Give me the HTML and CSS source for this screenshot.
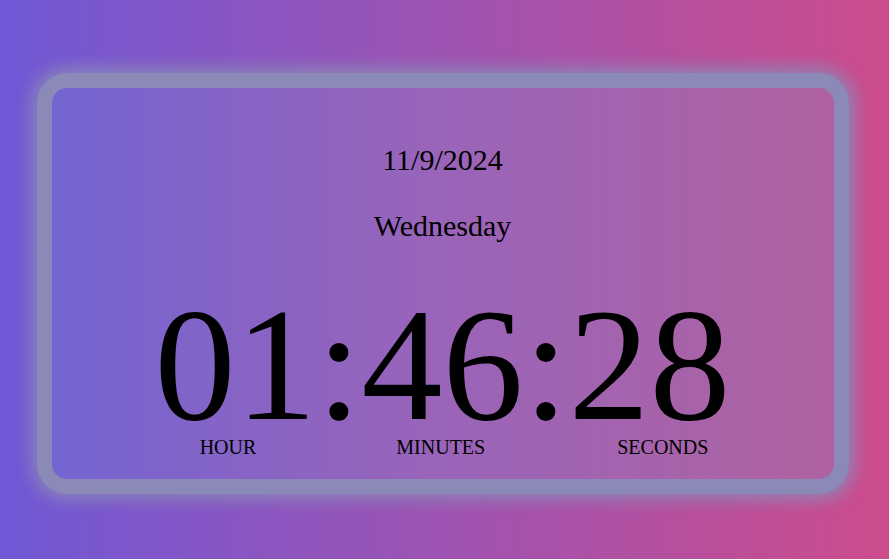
FILE: index.html
```html
<!DOCTYPE html>
<html lang="en">
<head>
<meta charset="utf-8">
<title>Clock</title>
<link rel="stylesheet" href="styles.css">
</head>
<body>
  <main class="clock">
    <h2 class="date">11/9/2024</h2>
    <h2 class="day">Wednesday</h2>
    <div class="time">01:46:28</div>
    <div class="labels">
      <span class="label label-hour">HOUR</span>
      <span class="label label-min">MINUTES</span>
      <span class="label">SECONDS</span>
    </div>
  </main>
</body>
</html>
```

FILE: styles.css
```css
* { box-sizing: border-box; }

html, body { height: 100%; }

body {
  margin: 0;
  padding: 8px 4px 0 0;
  display: flex;
  align-items: center;
  justify-content: center;
  background: linear-gradient(to right, #7058d6, #9e53b2 50%, #cd4c8c);
  font-family: "Liberation Serif", "Times New Roman", serif;
  color: #000;
}

.clock {
  box-sizing: content-box;
  width: 782px;
  padding: 55px 0 21px;
  border: 15px solid #8a89b7;
  border-radius: 30px;
  background: linear-gradient(to right, #7464d1, #9a64b9 50%, #af62a0);
  box-shadow: 0 0 16px 6px rgba(138, 137, 183, 0.85);
  text-align: center;
}

.date, .day {
  margin: 0;
  font-size: 30px;
  font-weight: normal;
  line-height: 34px;
}

.day { margin-top: 32px; }

.time {
  margin-top: 50px;
  font-size: 162px;
  line-height: 143px;
}

.labels {
  display: flex;
  justify-content: center;
  font-size: 20px;
  line-height: 22px;
  padding-left: 23px;
}

.label-hour { margin-right: 140px; }
.label-min { margin-right: 132px; }
```
